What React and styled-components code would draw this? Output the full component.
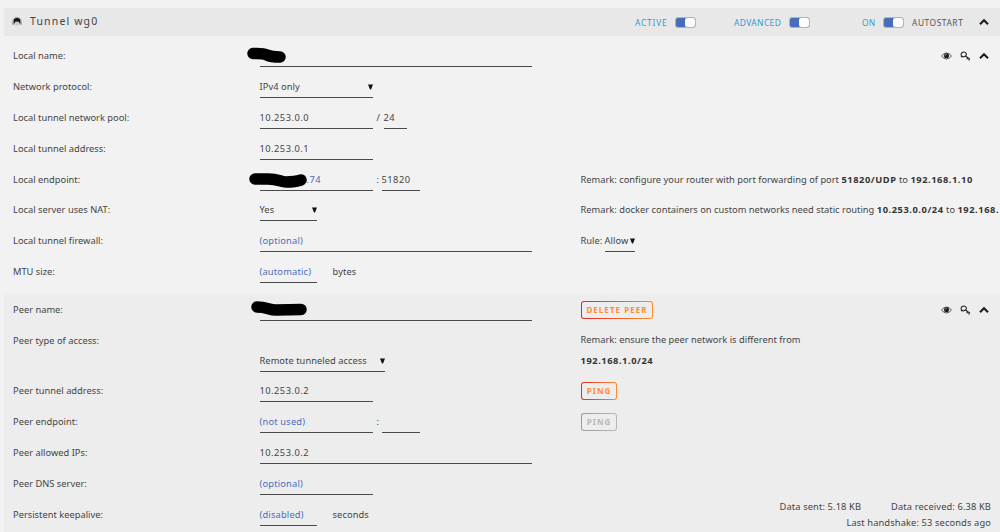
import React from "react";
import styled, { createGlobalStyle } from "styled-components";

const GlobalStyle = createGlobalStyle`
  * {
    box-sizing: border-box;
  }
  body {
    margin: 0;
    background: #f2f2f2;
    overflow: hidden;
  }
`;

const Page = styled.div`
  width: 1000px;
  height: 532px;
  padding: 8px 0 0 4px;
  overflow: hidden;
  background: #f2f2f2;
  color: #444;
  font-family: "Noto Sans", sans-serif;
  font-size: 9.3px;
  letter-spacing: 0.01px;
  white-space: nowrap;
  b {
    color: #333;
    letter-spacing: 0.56px;
  }
`;

const TitleBar = styled.div`
  display: flex;
  align-items: center;
  height: 28px;
  padding: 0 11px 0 8px;
  background: #e8e8e8;
`;

const Title = styled.div`
  flex: 1;
  margin-left: 8px;
  font-size: 10.5px;
  line-height: 26px;
  height: 28px;
  letter-spacing: 1.15px;
`;

const SwitchLabel = styled.span`
  color: ${(props) => (props.$muted ? "#555" : "#2f9bd6")};
  width: ${(props) => props.$width}px;
  font-size: 8.4px;
  letter-spacing: ${(props) => props.$spacing || 0.8}px;
`;

const Toggle = styled.span`
  width: 21px;
  height: 11px;
  margin: 0 ${(props) => props.$gap}px 0 8px;
  border: 1px solid #b5b5b5;
  border-radius: 3px;
  background: #486dba;
  &::after {
    content: "";
    display: block;
    width: 10px;
    height: 9px;
    margin-left: 9px;
    border-radius: 2px;
    background: #fcfcfc;
  }
`;

const Section = styled.div`
  position: relative;
  height: ${(props) => props.$height}px;
  padding: ${(props) => (props.$shaded ? 1 : 4)}px 0 0 9px;
  background: ${(props) => (props.$shaded ? "#ededed" : "transparent")};
`;

const Row = styled.div`
  display: grid;
  grid-template-columns: 246.5px 321px 1fr;
  height: ${(props) => props.$height || 30.9}px;
  line-height: 31px;
`;

const Cell = styled.div`
  display: flex;
  align-items: flex-start;
  padding-top: ${(props) => props.$top || 0}px;
`;

const Field = styled.div`
  position: relative;
  display: flex;
  justify-content: space-between;
  width: ${(props) => props.$width}px;
  height: 27px;
  line-height: 32px;
  border-bottom: 1px solid #4a4a4a;
  letter-spacing: ${(props) => (props.$numeric ? 0.48 : props.$blue ? 0.18 : 0.05)}px;
  color: ${(props) => (props.$blue ? "#486dba" : "#444")};
`;

const Hidden = styled.span`
  padding-left: 47px;
`;

const Arrow = styled.svg`
  flex: none;
  width: 5px;
  height: 6px;
  margin-top: 13px;
  fill: #111;
`;

const Divider = styled.span`
  width: ${(props) => props.$width}px;
  padding-left: 4px;
  line-height: 32px;
`;

const Unit = styled.span`
  margin-left: 16px;
  line-height: 32px;
  letter-spacing: 0.1px;
`;

const RuleLabel = styled.span`
  width: 24px;
`;

const Scribble = styled.svg`
  position: absolute;
  left: ${(props) => props.$left}px;
  top: ${(props) => props.$top}px;
  overflow: visible;
  fill: none;
  stroke: #000;
  stroke-width: 11.5;
  stroke-linecap: round;
  stroke-linejoin: round;
`;

const Note = styled.div`
  width: 440px;
  padding-top: ${(props) => props.$top || 0}px;
  line-height: ${(props) => props.$line || 31}px;
`;

const Button = styled.button`
  width: ${(props) => props.$width}px;
  height: 18px;
  margin-top: 7px;
  padding: 0 0 0 1px;
  border: 1px solid transparent;
  border-radius: 3px;
  background: ${(props) =>
    props.disabled
      ? "linear-gradient(#ededed, #ededed) padding-box, linear-gradient(90deg, #999, #b8b8b8) border-box"
      : "linear-gradient(#ededed, #ededed) padding-box, linear-gradient(90deg, #e22828, #ff8c2f) border-box"};
  color: ${(props) => (props.disabled ? "#b8b8b8" : "#ff8c2f")};
  font: bold 8px/16px "Noto Sans", sans-serif;
  letter-spacing: 1.05px;
`;

const Actions = styled.div`
  position: absolute;
  top: ${(props) => props.$top}px;
  right: 11px;
  display: flex;
  align-items: center;
  gap: 8px;
  height: 12px;
  color: #1c1c1c;
`;

const Stats = styled.div`
  position: absolute;
  right: 9px;
  top: 206px;
  line-height: 15.5px;
  text-align: right;
  letter-spacing: 0.12px;
  span {
    margin-left: 30px;
  }
`;

const SelectArrow = () => (
  <Arrow viewBox="0 0 5 6">
    <path d="M0 .5h5L3 5.6H2z" />
  </Arrow>
);

const ChevronIcon = () => (
  <svg width="10" height="8" viewBox="0 0 10 8" fill="none" stroke="#1c1c1c">
    <path d="M1 6.2L5 2.2L9 6.2" strokeWidth="2.1" />
  </svg>
);

const EyeIcon = () => (
  <svg width="11" height="8" viewBox="0 0 11 8">
    <path d="M.5 4Q5.5-2 10.5 4Q5.5 10 .5 4z" fill="none" stroke="#333" strokeWidth=".8" />
    <circle cx="5.5" cy="3.7" r="2.5" fill="#1c1c1c" />
    <path d="M4.3 3.6Q4.3 2.5 5.5 2.4" fill="none" stroke="#ddd" strokeWidth=".6" />
  </svg>
);

const KeyIcon = () => (
  <svg width="11" height="11" viewBox="0 0 11 11" fill="none" stroke="currentColor">
    <ellipse cx="3.7" cy="3.4" rx="2.6" ry="2.3" transform="rotate(-25 3.7 3.4)" />
    <path d="M5.4 5L10 8.1M2.1 5L1 6.2M7.6 6.6L6.9 8.3M9.4 7.9L8.7 9.5" strokeWidth="1.1" />
  </svg>
);

const TunnelIcon = () => (
  <svg width="10" height="10" viewBox="0 0 10 10">
    <path d="M.7 8V4.5a4.3 4 0 0 1 8.6 0V8" fill="none" stroke="#999" />
    <path d="M1.6 7.5V4.2a3.4 3.2 0 0 1 6.8 0v3.3L6.4 4.8H3.6z" fill="#151515" />
    <path d="M3.6 4.8h2.8L8 8.5H2z" fill="#c9c9c9" />
  </svg>
);

const RowActions = ({ top }) => (
  <Actions $top={top}>
    <EyeIcon />
    <KeyIcon />
    <ChevronIcon />
  </Actions>
);

const App = () => {
  return (
    <>
      <GlobalStyle />
      <Page>
        <TitleBar>
          <TunnelIcon />
          <Title>Tunnel wg0</Title>
          <SwitchLabel $width={32}>ACTIVE</SwitchLabel>
          <Toggle $gap={38} />
          <SwitchLabel $width={47} $spacing={0.42}>
            ADVANCED
          </SwitchLabel>
          <Toggle $gap={52} />
          <SwitchLabel $width={13} $spacing={0.2}>
            ON
          </SwitchLabel>
          <Toggle $gap={8} />
          <SwitchLabel $muted $width={67} $spacing={0.55}>
            AUTOSTART
          </SwitchLabel>
          <ChevronIcon />
        </TitleBar>

        <Section $height={257}>
          <Row>
            <Cell>Local name:</Cell>
            <Cell>
              <Field $width={272}>
                <Scribble $left={-13} $top={7} width="40" height="16">
                  <path d="M6 6.5Q16 6 20 8T33 10" />
                </Scribble>
              </Field>
            </Cell>
          </Row>
          <Row>
            <Cell>Network protocol:</Cell>
            <Cell>
              <Field $width={113}>
                IPv4 only
                <SelectArrow />
              </Field>
            </Cell>
          </Row>
          <Row>
            <Cell>Local tunnel network pool:</Cell>
            <Cell>
              <Field $width={113} $numeric>
                10.253.0.0
              </Field>
              <Divider $width={11}>/</Divider>
              <Field $width={23} $numeric>
                24
              </Field>
            </Cell>
          </Row>
          <Row>
            <Cell>Local tunnel address:</Cell>
            <Cell>
              <Field $width={113} $numeric>
                10.253.0.1
              </Field>
            </Cell>
          </Row>
          <Row>
            <Cell>Local endpoint:</Cell>
            <Cell>
              <Field $width={113} $blue $numeric>
                <Hidden>.74</Hidden>
                <Scribble $left={-10} $top={7} width="58" height="16">
                  <path d="M5 8H18C29 8 30 11 36 11S48 10 51 9" />
                </Scribble>
              </Field>
              <Divider $width={9}>:</Divider>
              <Field $width={38} $numeric>
                51820
              </Field>
            </Cell>
            <Note>
              Remark: configure your router with port forwarding of port <b>51820/UDP</b> to <b>192.168.1.10</b>
            </Note>
          </Row>
          <Row>
            <Cell>Local server uses NAT:</Cell>
            <Cell>
              <Field $width={57}>
                Yes
                <SelectArrow />
              </Field>
            </Cell>
            <Note>
              Remark: docker containers on custom networks need static routing <b>10.253.0.0/24</b> to <b>192.168.</b>
            </Note>
          </Row>
          <Row>
            <Cell>Local tunnel firewall:</Cell>
            <Cell>
              <Field $width={272} $blue>
                (optional)
              </Field>
            </Cell>
            <Cell>
              <RuleLabel>Rule:</RuleLabel>
              <Field $width={30}>
                Allow
                <SelectArrow />
              </Field>
            </Cell>
          </Row>
          <Row>
            <Cell>MTU size:</Cell>
            <Cell>
              <Field $width={57} $blue>
                (automatic)
              </Field>
              <Unit>bytes</Unit>
            </Cell>
          </Row>
          <RowActions top={14} />
        </Section>

        <Section $height={239} $shaded>
          <Row $height={31}>
            <Cell>Peer name:</Cell>
            <Cell>
              <Field $width={272}>
                <Scribble $left={-9} $top={7} width="58" height="18">
                  <path d="M6 6C16 6 18 9 25 9L50 8.5" />
                </Scribble>
              </Field>
            </Cell>
            <Cell>
              <Button $width={72}>DELETE PEER</Button>
            </Cell>
          </Row>
          <Row $height={50}>
            <Cell>Peer type of access:</Cell>
            <Cell $top={20}>
              <Field $width={125}>
                Remote tunneled access
                <SelectArrow />
              </Field>
            </Cell>
            <Note $line={20.5} $top={5}>
              Remark: ensure the peer network is different from
              <br />
              <b>192.168.1.0/24</b>
            </Note>
          </Row>
          <Row $height={31}>
            <Cell>Peer tunnel address:</Cell>
            <Cell>
              <Field $width={113} $numeric>
                10.253.0.2
              </Field>
            </Cell>
            <Cell>
              <Button $width={36}>PING</Button>
            </Cell>
          </Row>
          <Row $height={31}>
            <Cell>Peer endpoint:</Cell>
            <Cell>
              <Field $width={113} $blue>
                (not used)
              </Field>
              <Divider $width={9}>:</Divider>
              <Field $width={38} />
            </Cell>
            <Cell>
              <Button $width={36} disabled>
                PING
              </Button>
            </Cell>
          </Row>
          <Row $height={31}>
            <Cell>Peer allowed IPs:</Cell>
            <Cell>
              <Field $width={272} $numeric>
                10.253.0.2
              </Field>
            </Cell>
          </Row>
          <Row $height={31}>
            <Cell>Peer DNS server:</Cell>
            <Cell>
              <Field $width={113} $blue>
                (optional)
              </Field>
            </Cell>
          </Row>
          <Row $height={31}>
            <Cell>Persistent keepalive:</Cell>
            <Cell>
              <Field $width={57} $blue>
                (disabled)
              </Field>
              <Unit>seconds</Unit>
            </Cell>
          </Row>
          <RowActions top={11} />
          <Stats>
            <span>Data sent: 5.18 KB</span>
            <span>Data received: 6.38 KB</span>
            <br />
            Last handshake: 53 seconds ago
          </Stats>
        </Section>
      </Page>
    </>
  );
};

export default App;
